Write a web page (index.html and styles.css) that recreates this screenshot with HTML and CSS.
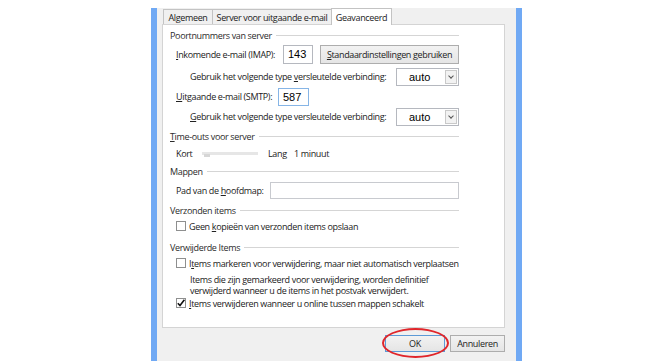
FILE: index.html
```html
<!DOCTYPE html>
<html lang="nl">
<head>
  <meta charset="UTF-8">
  <title>Instellingen voor e-mail</title>
  <link rel="stylesheet" href="styles.css">
</head>
<body>
  <div class="window">
    <div class="tabs">
      <div class="tab tab-1">Algemeen</div>
      <div class="tab tab-2">Server voor uitgaande e-mail</div>
      <div class="tab tab-3 active">Geavanceerd</div>
    </div>
    <div class="panel">
      <div class="group"><span>Poortnummers van server</span></div>
      <div class="row row-imap">
        <label class="lbl w-imap"><u>I</u>nkomende e-mail (IMAP):</label>
        <div class="field port">143</div>
        <button class="btn btn-std"><u>S</u>tandaardinstellingen gebruiken</button>
      </div>
      <div class="row sub row-enc1">
        <label class="lbl w-enc">Gebruik het volgende type <u>v</u>ersleutelde verbinding:</label>
        <div class="select"><span>auto</span><i class="arrow"></i></div>
      </div>
      <div class="row row-smtp">
        <label class="lbl w-smtp"><u>U</u>itgaande e-mail (SMTP):</label>
        <div class="field port focus">587</div>
      </div>
      <div class="row sub row-enc2">
        <label class="lbl w-enc"><u>G</u>ebruik het volgende type versleutelde verbinding:</label>
        <div class="select"><span>auto</span><i class="arrow"></i></div>
      </div>

      <div class="group g-time"><span><u>T</u>ime-outs voor server</span></div>
      <div class="row row-time">
        <span class="lbl w-kort">Kort</span>
        <div class="slider"><i class="thumb"></i></div>
        <span class="lbl w-lang">Lang</span>
        <span class="lbl">1 minuut</span>
      </div>

      <div class="group g-map"><span>Mappen</span></div>
      <div class="row row-pad">
        <label class="lbl w-pad">Pad van de <u>h</u>oofdmap:</label>
        <div class="field path"></div>
      </div>

      <div class="group g-sent"><span>Verzonden items</span></div>
      <div class="row check row-sent">
        <i class="box"></i>
        <span>Geen <u>k</u>opieën van verzonden items opslaan</span>
      </div>

      <div class="group g-del"><span>Verwijderde Items</span></div>
      <div class="row check row-mark">
        <i class="box"></i>
        <span>I<u>t</u>ems markeren voor verwijdering, maar niet automatisch verplaatsen</span>
      </div>
      <p class="desc">Items die zijn gemarkeerd voor verwijdering, worden definitief<br>verwijderd wanneer u de items in het postvak verwijdert.</p>
      <div class="row check row-purge">
        <i class="box checked">
          <svg width="10" height="10" viewBox="0 0 10 10"><path d="M1.8 5.2 L4 7.6 L8.4 1.8" fill="none" stroke="#111" stroke-width="1.6"/></svg>
        </i>
        <span><u>I</u>tems verwijderen wanneer u online tussen mappen schakelt</span>
      </div>
    </div>
    <div class="actions">
      <button class="btn btn-ok">OK</button>
      <button class="btn btn-cancel">Annuleren</button>
    </div>
  </div>
  <div class="highlight"></div>
</body>
</html>
```

FILE: styles.css
```css
body {
  margin: 0;
  background: #fff;
  font-family: 'Open Sans', 'Segoe UI', Tahoma, sans-serif;
  font-size: 9px;
  letter-spacing: -0.35px;
  color: #222;
  overflow: hidden;
  width: 668px;
  height: 361px;
  position: relative;
}

.window {
  margin-left: 151px;
  margin-top: 8px;
  width: 354px;
  height: 360px;
  border-left: 6px solid #70a9f4;
  border-right: 6px solid #70a9f4;
  background: #f0f0f0;
  padding-left: 5px;
  box-sizing: content-box;
}

.tabs {
  display: flex;
  height: 16px;
  padding-left: 1px;
}

.tab {
  height: 15px;
  margin-top: 1px;
  border: 1px solid #c3c3c3;
  border-bottom: none;
  background: #f0f0f0;
  display: flex;
  align-items: center;
  justify-content: center;
  box-sizing: border-box;
  white-space: nowrap;
}

.tab-1 { width: 50px; }
.tab-2 { width: 120px; margin-left: -1px; }
.tab-3 { width: 61px; margin-left: -1px; }

.tab.active {
  background: #fff;
  margin-top: 0;
  height: 17px;
  position: relative;
  z-index: 1;
}

.panel {
  width: 343px;
  height: 304px;
  box-sizing: border-box;
  border: 1px solid #d4d4d4;
  background: #fff;
  padding: 3px 45px 0 7px;
}

.group {
  display: flex;
  align-items: center;
  height: 14px;
  color: #2b2b2b;
}

.group::after {
  content: "";
  flex: 1;
  height: 1px;
  background: #d5d5d5;
  margin-left: 4px;
}

.row {
  display: flex;
  align-items: center;
  padding-left: 6px;
  white-space: nowrap;
}

.row.sub { padding-left: 20px; }

.lbl { flex: none; white-space: nowrap; }
.w-imap { width: 107px; }
.w-enc { width: 206px; }
.w-smtp { width: 102px; }
.w-kort { width: 26px; }
.w-lang { width: 26px; margin-left: 10px; }
.w-pad { width: 94px; }

.row-imap { height: 20px; margin-top: 2px; }
.row-enc1 { height: 19px; margin-top: 3px; }
.row-smtp { height: 19px; margin-top: 1px; }
.row-enc2 { height: 19px; margin-top: 1px; }
.g-time { margin-top: 3px; }
.row-time { height: 14px; margin-top: 3px; }
.g-map { margin-top: 4px; }
.row-pad { height: 17px; margin-top: 4px; }
.g-sent { margin-top: 4px; }
.row-sent { height: 14px; margin-top: 2px; }
.g-del { margin-top: 7px; }
.row-mark { height: 14px; margin-top: 2px; }
.row-purge { height: 14px; }

.field {
  box-sizing: border-box;
  background: #fff;
  border: 1px solid #b5b8bf;
}

.port {
  height: 19px;
  width: 30px;
  font-family: 'Liberation Sans', Arial, sans-serif;
  font-size: 11px;
  letter-spacing: 0;
  color: #000;
  display: flex;
  align-items: center;
  padding-left: 4px;
}

.port.focus {
  width: 31px;
  height: 18px;
  border-color: #86b5e6;
}

.path {
  width: 189px;
  height: 17px;
  border-color: #c8cacf;
}

.btn {
  font-family: inherit;
  font-size: 9px;
  letter-spacing: -0.35px;
  color: #222;
  box-sizing: border-box;
  border: 1px solid #adadad;
  background: linear-gradient(#f2f2f2, #e5e5e5);
  padding: 0;
  margin: 0;
}

.btn-std {
  width: 139px;
  height: 19px;
  margin-left: 7px;
}

.select {
  width: 64px;
  height: 18px;
  box-sizing: border-box;
  border: 1px solid #b5b8bf;
  background: #fff;
  display: flex;
  align-items: center;
  font-family: 'Liberation Sans', Arial, sans-serif;
  font-size: 11px;
  letter-spacing: 0;
  color: #000;
}

.select span {
  flex: 1;
  padding-left: 12px;
}

.arrow {
  width: 12px;
  height: 14px;
  margin-right: 1px;
  box-sizing: border-box;
  border: 1px solid #c9c9c9;
  background: #f2f2f2;
  position: relative;
}

.arrow::after {
  content: "";
  position: absolute;
  left: 3px;
  top: 3px;
  width: 3px;
  height: 3px;
  border-right: 1px solid #555;
  border-bottom: 1px solid #555;
  transform: rotate(45deg);
}

.slider {
  width: 56px;
  height: 3px;
  background: #e6e6e6;
  position: relative;
  flex: none;
}

.thumb {
  position: absolute;
  left: 2px;
  top: 2px;
  width: 6px;
  height: 3px;
  background: #d6d6d6;
}

.check .box {
  width: 10px;
  height: 10px;
  box-sizing: border-box;
  border: 1px solid #8e8f8f;
  background: #fff;
  margin-right: 3px;
  flex: none;
  display: flex;
}

.check .box svg {
  margin: -1px;
}

.desc {
  margin: 4px 0 0 0;
  padding-left: 20px;
  line-height: 11px;
  height: 22px;
  white-space: nowrap;
}

.actions {
  display: flex;
  justify-content: flex-end;
  gap: 5px;
  width: 343px;
  margin-top: 7px;
}

.btn-ok {
  width: 60px;
  height: 17px;
  border-color: #5d9ad6;
}

.btn-cancel {
  width: 55px;
  height: 17px;
}

.highlight {
  position: absolute;
  left: 382px;
  top: 328px;
  width: 67px;
  height: 30px;
  box-sizing: border-box;
  border: 2px solid #e0262b;
  border-radius: 50%;
}
```
